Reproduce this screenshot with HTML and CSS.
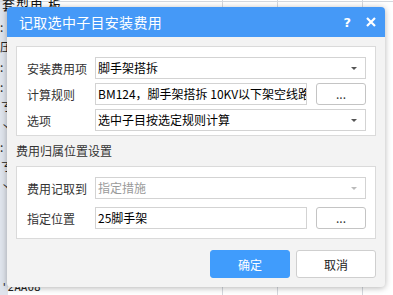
FILE: index.html
```html
<!DOCTYPE html>
<html lang="zh-CN">
<head>
    <meta charset="UTF-8">
    <meta name="viewport" content="width=device-width, initial-scale=1.0">
    <title>记取选中子目安装费用</title>
    <link rel="stylesheet" href="styles.css">
</head>
<body>
    <div class="sheet">
        <div class="sheetTop">套型电 板</div>
        <div class="sheetSide">
            <span>:</span>
            <span>压</span>
            <span>:</span>
            <span>:</span>
            <span>ㄋ</span>
            <span>丶</span>
            <span>:</span>
            <span>ㄋ</span>
            <span>丶</span>
        </div>
        <div class="sheetBottom">'2AA08</div>
    </div>

    <div class="dialog">
        <div class="titleBar">
            <span class="titleText">记取选中子目安装费用</span>
            <span class="help">?</span>
            <svg class="close" width="10" height="10" viewBox="0 0 10 10">
                <path d="M1 1 L9 9 M9 1 L1 9" stroke="#fff" stroke-width="2.2" fill="none"/>
            </svg>
        </div>

        <div class="dialogBody">
            <div class="group groupTop">
                <div class="row">
                    <label>安装费用项</label>
                    <div class="select">
                        <span>脚手架搭拆</span>
                        <i class="arrow"></i>
                    </div>
                </div>
                <div class="row">
                    <label>计算规则</label>
                    <div class="withButton">
                        <div class="input">BM124，脚手架搭拆 10KV以下架空线路</div>
                        <button class="dots">...</button>
                    </div>
                </div>
                <div class="row">
                    <label>选项</label>
                    <div class="select">
                        <span>选中子目按选定规则计算</span>
                        <i class="arrow"></i>
                    </div>
                </div>
            </div>

            <div class="groupTitle">费用归属位置设置</div>

            <div class="group groupBottom">
                <div class="row">
                    <label>费用记取到</label>
                    <div class="select disabled">
                        <span>指定措施</span>
                        <i class="arrow"></i>
                    </div>
                </div>
                <div class="row">
                    <label>指定位置</label>
                    <div class="withButton">
                        <div class="input">25脚手架</div>
                        <button class="dots">...</button>
                    </div>
                </div>
            </div>

            <div class="actions">
                <button class="btn primary">确定</button>
                <button class="btn">取消</button>
            </div>
        </div>
    </div>
</body>
</html>
```

FILE: styles.css
```css
*{
    margin: 0;
    padding: 0;
    box-sizing: border-box;
}

body{
    width: 393px;
    height: 295px;
    overflow: hidden;
    font-family: "Noto Sans CJK SC", "Microsoft YaHei", sans-serif;
    font-size: 12px;
    color: #333;
    background: #fff;
}

/* spreadsheet behind the dialog */
.sheet{
    height: 295px;
    display: flex;
    flex-direction: column;
    background-color: #fff;
    background-image:
        linear-gradient(to right, transparent 222px, #d4d8de 222px, #d4d8de 223px, transparent 223px),
        linear-gradient(to right, transparent 277px, #d4d8de 277px, #d4d8de 278px, transparent 278px),
        linear-gradient(to right, transparent 362px, #d4d8de 362px, #d4d8de 363px, transparent 363px),
        linear-gradient(to bottom, transparent 1px, #d4d8de 1px, #d4d8de 2px, transparent 2px),
        linear-gradient(to right, #dfe4ec 0, #dfe4ec 8px, transparent 8px);
}

.sheetTop{
    height: 14px;
    line-height: 10px;
    padding-left: 2px;
    font-family: "Noto Sans CJK SC", "SimSun", serif;
    font-size: 13px;
    color: #111;
    letter-spacing: 1px;
}

.sheetSide{
    flex: 1;
    display: flex;
    flex-direction: column;
    gap: 6px;
    padding-top: 6px;
    width: 8px;
    overflow: hidden;
    font-size: 12px;
    line-height: 14px;
    color: #222;
}

.sheetBottom{
    height: 12px;
    line-height: 10px;
    padding-left: 1px;
    font-family: "DejaVu Sans Mono", monospace;
    font-size: 11px;
    color: #222;
}

/* dialog */
.dialog{
    position: absolute;
    left: 7px;
    top: 7px;
    width: 378px;
    height: 280px;
    background-color: #f3f3f3;
    border-radius: 4px;
    box-shadow: 0 1px 6px rgba(0, 0, 0, 0.3);
    overflow: hidden;
}

.titleBar{
    height: 30px;
    background-color: #4599f7;
    color: #fff;
    display: flex;
    align-items: center;
    padding: 0 9px 0 12px;
}

.titleText{
    flex: 1;
    font-size: 14px;
    letter-spacing: 0.3px;
}

.help{
    font-family: "DejaVu Sans", sans-serif;
    font-weight: bold;
    font-size: 13px;
    margin-right: 15px;
}

.close{
    display: block;
}

.dialogBody{
    padding: 9px 9px 8px 9px;
}

.group{
    background-color: #fff;
    border: 1px solid #dadada;
    display: grid;
    padding: 10px 9px 4px 10px;
}

.groupTop{
    gap: 4px;
}

.groupBottom{
    gap: 8px;
    padding-bottom: 9px;
}

.groupTitle{
    height: 30px;
    line-height: 30px;
    color: #333;
}

.row{
    display: grid;
    grid-template-columns: 68px 1fr;
    align-items: center;
}

.row label{
    color: #333;
}

.select, .input{
    height: 22px;
    border: 1px solid #d3d3d3;
    background-color: #fff;
    padding: 0 2px;
    line-height: 20px;
    color: #000;
    white-space: nowrap;
    overflow: hidden;
}

.select{
    display: flex;
    align-items: center;
}

.select span{
    flex: 1;
}

.select.disabled{
    color: #9a9a9a;
}

.arrow{
    width: 0;
    height: 0;
    border-left: 3px solid transparent;
    border-right: 3px solid transparent;
    border-top: 3px solid #555;
    margin-right: 6px;
}

.select.disabled .arrow{
    border-top-color: #bbb;
}

.withButton{
    display: grid;
    grid-template-columns: 1fr 50px;
    gap: 9px;
}

.dots{
    height: 22px;
    border: 1px solid #c4c4c4;
    border-radius: 3px;
    background-color: #fff;
    font-family: "Noto Sans CJK SC", sans-serif;
    font-size: 12px;
    color: #333;
    line-height: 16px;
}

.actions{
    display: flex;
    justify-content: flex-end;
    gap: 6px;
    margin-top: 11px;
}

.btn{
    width: 80px;
    height: 28px;
    border: 1px solid #cfcfcf;
    border-radius: 3px;
    background-color: #fff;
    font-family: "Noto Sans CJK SC", sans-serif;
    font-size: 12px;
    color: #222;
}

.btn.primary{
    border-color: #409cfc;
    background-color: #409cfc;
    color: #fff;
}
```
